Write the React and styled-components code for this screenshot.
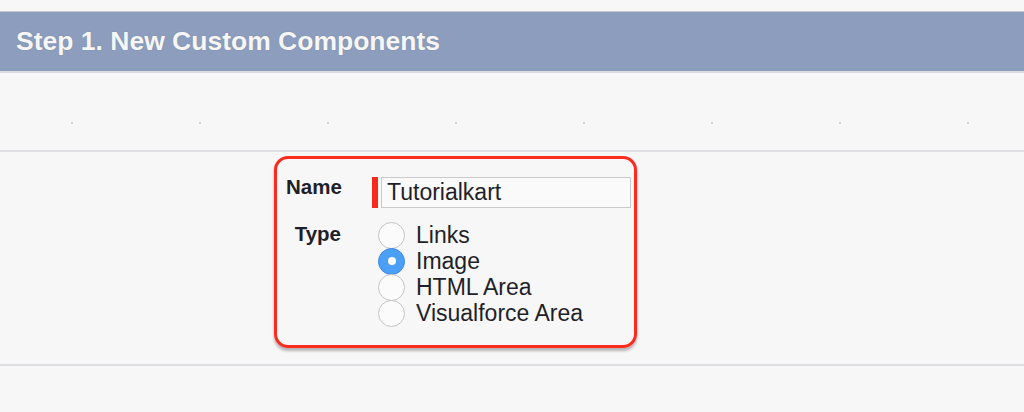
import React from 'react';
import styled, { createGlobalStyle } from 'styled-components';

const GlobalStyle = createGlobalStyle`
  body {
    margin: 0;
    background: #f7f7f7;
    font-family: "Liberation Sans", Arial, sans-serif;
  }
`;

const Page = styled.div`
  width: 1024px;
  height: 412px;
  padding-top: 11px;
  box-sizing: border-box;
  overflow: hidden;
`;

const Header = styled.div`
  height: 59px;
  background: #8c9dbd;
  border-top: 1px solid #c6c9d2;
  border-bottom: 2px solid #dcdde2;
  display: flex;
  align-items: center;
  padding-left: 16px;

  h2 {
    margin: 0;
    color: #f6f6f6;
    font-size: 26.5px;
    font-weight: 700;
    text-shadow: 0 0 1px rgba(90, 100, 120, 0.5);
  }
`;

const DotRow = styled.div`
  height: 77px;
  background-image: radial-gradient(circle, #cfcfcf 0.8px, transparent 1px);
  background-size: 128px 4px;
  background-position: 8px 48px;
  background-repeat: repeat-x;
`;

const Divider = styled.div`
  border-top: 2px solid #dfdfe3;
`;

const FormArea = styled.div`
  padding: 4px 0 0 274px;
  height: 212px;
  box-sizing: border-box;
`;

const Highlight = styled.div`
  width: 363px;
  height: 192px;
  box-sizing: border-box;
  border: 3.5px solid #fb2c1f;
  border-radius: 14px;
  box-shadow: 0 3px 3px rgba(0, 0, 0, 0.28);
  padding: 18px 0 0 9px;
  display: grid;
  grid-template-columns: 55px 1fr;
  align-content: start;
  column-gap: 31px;
  row-gap: 16px;
  color: #1f1f29;
`;

const Label = styled.div`
  font-size: 20.5px;
  font-weight: 700;
  text-align: right;
  line-height: 24px;
  margin-top: ${p => p.offset}px;
`;

const Field = styled.div`
  display: flex;
  align-items: stretch;
  height: 31px;
  gap: 3px;
`;

const Required = styled.span`
  width: 6px;
  background: #f52a1d;
`;

const Input = styled.div`
  width: 250px;
  box-sizing: border-box;
  border: 1px solid #cbc9cb;
  background: #fafafa;
  font-size: 23px;
  line-height: 29px;
  padding-left: 5px;
`;

const RadioList = styled.div`
  display: flex;
  flex-direction: column;
  margin: -2px 0 0 6px;
`;

const RadioRow = styled.div`
  display: flex;
  align-items: center;
  height: 26px;
  font-size: 23px;
  gap: 11px;
`;

const Circle = styled.span`
  width: 27px;
  height: 27px;
  box-sizing: border-box;
  border-radius: 50%;
  flex: none;
  display: flex;
  align-items: center;
  justify-content: center;
  border: 1px solid ${p => (p.checked ? '#3f86e0' : '#c4c4c4')};
  background: ${p => (p.checked ? '#4b9ff7' : '#fbfbfb')};

  &::after {
    content: '';
    display: ${p => (p.checked ? 'block' : 'none')};
    width: 8px;
    height: 8px;
    border-radius: 50%;
    background: #fff;
  }
`;

const types = ['Links', 'Image', 'HTML Area', 'Visualforce Area'];

export default function App() {
  return (
    <Page>
      <GlobalStyle />
      <Header>
        <h2>Step 1. New Custom Components</h2>
      </Header>
      <DotRow />
      <Divider />
      <FormArea>
        <Highlight>
          <Label offset={-2}>Name</Label>
          <Field>
            <Required />
            <Input>Tutorialkart</Input>
          </Field>
          <Label offset={-2}>Type</Label>
          <RadioList>
            {types.map(t => (
              <RadioRow key={t}>
                <Circle checked={t === 'Image'} />
                {t}
              </RadioRow>
            ))}
          </RadioList>
        </Highlight>
      </FormArea>
      <Divider />
    </Page>
  );
}
